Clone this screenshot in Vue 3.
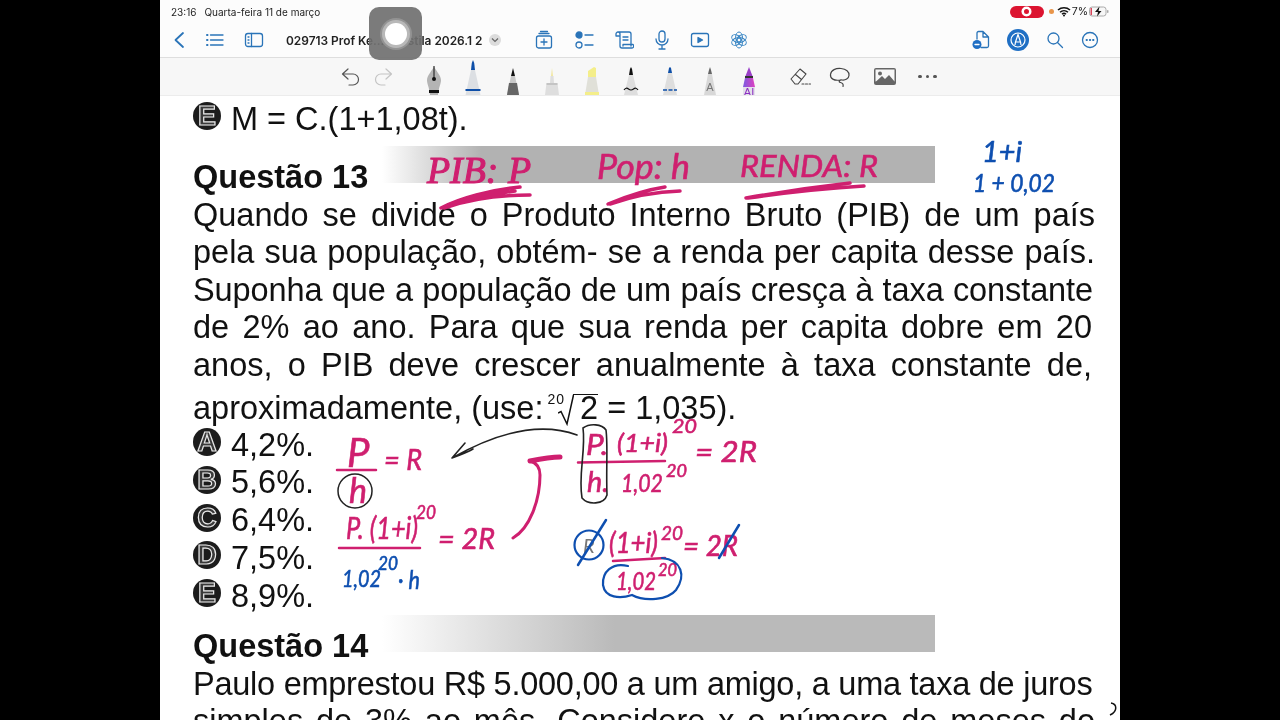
<script setup>
const firstLines = [
  { text: 'Quando se divide o Produto Interno Bruto (PIB) de um país', cls: '' },
  { text: 'pela sua população, obtém- se a renda per capita desse país.', cls: '' },
  { text: 'Suponha que a população de um país cresça à taxa constante', cls: 'end-2' },
  { text: 'de 2% ao ano. Para que sua renda per capita dobre em 20', cls: 'end-3' },
  { text: 'anos, o PIB deve crescer anualmente à taxa constante de,', cls: 'end-3' }
]

const options = [
  { letter: 'A', value: '4,2%.' },
  { letter: 'B', value: '5,6%.' },
  { letter: 'C', value: '6,4%.' },
  { letter: 'D', value: '7,5%.' },
  { letter: 'E', value: '8,9%.' }
]
</script>

<template>
  <div class="screen">
    <div class="ipad">
      <div class="status">
        <span class="time">23:16</span>
        <span class="date">Quarta-feira 11 de março</span>
        <span class="rec"><i></i></span>
        <span class="dot"></span>
        <svg width="14" height="11" viewBox="0 0 14 11">
          <path d="M1 4a9 9 0 0 1 12 0M3 6.200a6 6 0 0 1 8 0M5 8.200a3 3 0 0 1 4 0" fill="none" stroke="#111" stroke-width="1.500" />
          <circle cx="7" cy="9.500" r="1" fill="#111" />
        </svg>
        <span class="pct">7%</span>
        <svg width="20" height="11" viewBox="0 0 20 11">
          <rect x="0.500" y="1" width="16.500" height="9" rx="2.500" fill="#f7f7f7" stroke="#aaa" />
          <rect x="1.500" y="2" width="1.500" height="7" fill="#d8455a" />
          <rect x="18" y="4" width="1.500" height="3" rx="0.700" fill="#aaa" />
          <path d="M10.500 0.500 6 6h3l-1 4.500L12.500 5h-3z" fill="#111" />
        </svg>
      </div>

      <div class="nav">
        <svg class="ico back" width="14" height="20" viewBox="0 0 14 20"><path d="M11 3 3.500 10 11 17" /></svg>
        <svg class="ico list" width="20" height="20" viewBox="0 0 20 20">
          <path d="M5.500 5H18M5.500 10H18M5.500 15H18" />
          <path d="M2 5h.5M2 10h.5M2 15h.5" stroke-width="2" />
        </svg>
        <svg class="ico side" width="20" height="20" viewBox="0 0 20 20">
          <rect x="1.500" y="3.500" width="17" height="13" rx="2.500" />
          <path d="M7.500 3.500v13M4 7h1M4 10h1M4 13h1" />
        </svg>
        <span class="title">029713 Prof Ke...Apostila 2026.1 2</span>
        <span class="chev">
          <svg width="8" height="6" viewBox="0 0 8 6"><path d="M1 1.500 4 4.500 7 1.500" fill="none" stroke="#666" stroke-width="1.200" /></svg>
        </span>
        <div class="nav-mid">
          <svg class="ico" width="20" height="20" viewBox="0 0 20 20">
            <rect x="2.500" y="6" width="15" height="12" rx="2" />
            <path d="M5 3.500h10M6.500 1.500h7M10 9v6M7 12h6" />
          </svg>
          <svg class="ico" width="20" height="20" viewBox="0 0 20 20">
            <circle cx="5" cy="5" r="3" fill="#2a74b8" />
            <circle cx="5" cy="15" r="3" />
            <path d="M11 5h8M11 15h8" />
          </svg>
          <svg class="ico" width="20" height="20" viewBox="0 0 20 20">
            <path d="M4 2h11a2 2 0 0 1 2 2v12M4 2a2 2 0 0 0-2 2v2h3M4 2a2 2 0 0 1 2 2v12a2 2 0 0 0 2 2h10a2 2 0 0 0 1-3.500H9v1.500M9 7h5M9 10h5" />
          </svg>
          <svg class="ico" width="16" height="20" viewBox="0 0 16 20">
            <rect x="5" y="1" width="6" height="11" rx="3" />
            <path d="M2 9a6 6 0 0 0 12 0M8 15v4M5 19h6" />
          </svg>
          <svg class="ico" width="20" height="20" viewBox="0 0 20 20">
            <rect x="1.500" y="3.500" width="17" height="13" rx="2" />
            <path d="M8 7.500v5l4.500-2.500z" fill="#2a74b8" />
          </svg>
          <svg class="ico knot" width="18" height="18" viewBox="0 0 18 18">
            <ellipse cx="9" cy="6" rx="3.400" ry="5" />
            <ellipse cx="9" cy="6" rx="3.400" ry="5" transform="rotate(60 9 9)" />
            <ellipse cx="9" cy="6" rx="3.400" ry="5" transform="rotate(120 9 9)" />
            <ellipse cx="9" cy="6" rx="3.400" ry="5" transform="rotate(180 9 9)" />
            <ellipse cx="9" cy="6" rx="3.400" ry="5" transform="rotate(240 9 9)" />
            <ellipse cx="9" cy="6" rx="3.400" ry="5" transform="rotate(300 9 9)" />
          </svg>
        </div>
        <div class="nav-right">
          <svg class="ico" width="18" height="20" viewBox="0 0 18 20">
            <path d="M5 9V3a1.500 1.500 0 0 1 1.500-1.500H11L16.500 7v9a1.500 1.500 0 0 1-1.500 1.500H9M11 1.500V7h5.500" />
            <circle cx="5" cy="14.500" r="4.500" fill="#1f6fc4" stroke="none" />
            <path d="M3 14.500h4" stroke="#fff" />
          </svg>
          <span class="pen-on">
            <svg width="16" height="16" viewBox="0 0 16 16">
              <circle cx="8" cy="8" r="7" fill="none" stroke="#fff" stroke-width="1.200" />
              <path d="M8 2.500 5.500 10h5zM5.500 10l-.5 3M10.500 10l.5 3" fill="none" stroke="#fff" stroke-width="1.200" />
            </svg>
          </span>
          <svg class="ico" width="18" height="18" viewBox="0 0 18 18">
            <circle cx="7.500" cy="7.500" r="5.500" />
            <path d="M11.500 11.500 16.500 16.500" />
          </svg>
          <svg class="ico" width="18" height="18" viewBox="0 0 18 18">
            <circle cx="9" cy="9" r="7.500" />
            <path d="M5.500 9h.5M8.800 9h.5M12 9h.5" stroke-width="1.800" />
          </svg>
        </div>
      </div>

      <div class="tools">
        <svg class="stroke dark" width="22" height="22" viewBox="0 0 22 22"><path d="M8 3 2.500 8 8 13M3 8h10a5.500 5.500 0 0 1 0 11H9" /></svg>
        <svg class="stroke pale" width="22" height="22" viewBox="0 0 22 22"><path d="M14 3l5.500 5L14 13M19 8H9a5.500 5.500 0 0 0 0 11h4" /></svg>

        <div class="pens">
          <svg width="24" height="37" viewBox="0 0 24 37">
            <path d="M12 8 C13 12 19 17 19 22 C19 26 17 28 16 37 H8 C7 28 5 26 5 22 C5 17 11 12 12 8z" fill="#b4b4b4" />
            <path d="M12 8v12" stroke="#111" />
            <circle cx="12" cy="21" r="2" fill="#111" />
            <rect x="7" y="32" width="10" height="3" fill="#111" />
          </svg>
          <svg width="24" height="37" viewBox="0 0 24 37">
            <path d="M10 12 10.800 5 12 2 13.200 5 14 12z" fill="#0e4fa8" />
            <path d="M10 12h4L19.500 37h-15z" fill="#dcdfe3" />
            <rect x="4.500" y="31" width="15" height="2" fill="#0e4fa8" />
          </svg>
          <svg width="24" height="37" viewBox="0 0 24 37">
            <path d="M10 18 12 10 14 18z" fill="#111" />
            <path d="M10 18h4L18 37H6z" fill="#c8c8c8" />
            <path d="M8 25h8L18 37H6z" fill="#666" />
          </svg>
          <svg width="24" height="37" viewBox="0 0 24 37">
            <path d="M11 18 12 10 13 18z" fill="#f1e7a0" />
            <path d="M10.500 18h3l.5 7h3.500L19 37H5l1.500-12H10z" fill="#dedede" />
            <path d="M6.500 26h11" stroke="#aaa" />
          </svg>
          <svg width="24" height="37" viewBox="0 0 24 37">
            <path d="M8 19V13l6-4 2 1v9z" fill="#f4ee8a" />
            <path d="M8 19h8L19 37H5z" fill="#e0e0d8" />
            <rect x="5" y="34" width="14" height="3" fill="#f4ee8a" />
          </svg>
          <svg width="24" height="37" viewBox="0 0 24 37">
            <path d="M10 17 11 11 12 9 13 11 14 17z" fill="#111" />
            <path d="M10 17h4L19 37H5z" fill="#dedede" />
            <path d="M5 32q2-3 4.500-1t5 0 4.500 1" fill="none" stroke="#111" stroke-width="1.200" />
          </svg>
          <svg width="24" height="37" viewBox="0 0 24 37">
            <path d="M10 15 11 10 12 9 13 10 14 15z" fill="#0e4fa8" />
            <path d="M10 15h4L19 37H5z" fill="#dedede" />
            <path d="M5 32h14" stroke="#0e4fa8" stroke-width="1.600" stroke-dasharray="4 1.500" />
          </svg>
          <svg width="24" height="37" viewBox="0 0 24 37">
            <path d="M10 16 11 12 12 9 13 12 14 16z" fill="#666" />
            <path d="M10 16h4L18 37H6z" fill="#d8d8d8" />
            <text x="12" y="33" class="pen-text" fill="#777">A</text>
          </svg>
          <svg width="24" height="37" viewBox="0 0 24 37">
            <defs>
              <linearGradient id="aiPen" x1="0" y1="0" x2="1" y2="0">
                <stop offset="0" stop-color="#7b5be0" />
                <stop offset="1" stop-color="#e040c0" />
              </linearGradient>
            </defs>
            <path d="M8.500 18 12 9 15.500 18z" fill="#9a3fc8" />
            <rect x="8" y="18" width="8" height="2" fill="#333" />
            <path d="M8 20h8l2 9H6z" fill="url(#aiPen)" />
            <path d="M6 29h12v8H6z" fill="#e4e0ea" />
            <text x="12" y="38" class="pen-text" fill="#8a2fc0">AI</text>
          </svg>
        </div>

        <svg class="stroke eraser" width="22" height="22" viewBox="0 0 22 22">
          <path d="M2 13 11 3l6 5-8 10H6zM6.500 8.500l6 5M13 18h2M16.500 18H18.500M20 18h1.500" stroke-width="1.100" />
        </svg>
        <svg class="stroke lasso" width="22" height="22" viewBox="0 0 22 22">
          <path d="M11 14C5 15 1 12.500 1.500 8.500 2 4 7 2 12 2.500c5 .5 8.500 3 8 7-.3 3-3.500 5-7 4.500-2.500-.4-4 2-1.500 2.500 2.500.5 3 2 2.500 4" stroke-width="1.200" />
        </svg>
        <svg class="image" width="22" height="18" viewBox="0 0 22 18">
          <rect x="0" y="0" width="22" height="17" rx="2" fill="#666" />
          <rect x="1.500" y="1.500" width="19" height="12" fill="#f7f7f7" />
          <circle cx="6" cy="5.500" r="2" fill="#666" />
          <path d="M1.500 14 8 8l3 3 4-4 5.500 6.500V15h-19z" fill="#666" />
        </svg>
        <span class="more"><i></i><i></i><i></i></span>
      </div>

      <div class="page">
        <div class="line option first">
          <span class="badge">E</span>
          <span>M = C.(1+1,08t).</span>
        </div>

        <div class="heading">
          <strong>Questão 13</strong>
          <div class="band"></div>
        </div>
        <div class="line full" :class="row.cls" v-for="row in firstLines" :key="row.text">{{ row.text }}</div>
        <div class="line root-line">
          aproximadamente, (use:<sup class="index">20</sup><svg class="radical" width="16" height="32" viewBox="0 0 16 32"><path d="M0 19l3-1.500L9 30 15.500 1" fill="none" stroke="#111" stroke-width="1.500" /></svg><span class="radicand">2</span> = 1,035).
        </div>
        <div class="line option answer" v-for="item in options" :key="item.letter">
          <span class="badge">{{ item.letter }}</span>
          <span>{{ item.value }}</span>
        </div>

        <div class="heading">
          <strong>Questão 14</strong>
          <div class="band long"></div>
        </div>
        <div class="line tight">Paulo emprestou R$ 5.000,00 a um amigo, a uma taxa de juros</div>
        <div class="line full">simples de 3% ao mês. Considere x o número de meses do</div>
      </div>
    </div>

    <div class="record-box"><span></span></div>

    <!-- ink written over the page, sits on a free canvas -->
    <svg class="ink" width="1280" height="720" viewBox="0 0 1280 720">
      <g class="pink">
        <text class="serif" x="427" y="183" font-size="38" textLength="104" lengthAdjust="spacingAndGlyphs">PIB: P</text>
        <text x="597" y="179" font-size="34" textLength="93" lengthAdjust="spacingAndGlyphs">Pop: h</text>
        <text x="740" y="177" font-size="31" textLength="138" lengthAdjust="spacingAndGlyphs">RENDA: R</text>
        <text x="347" y="467" font-size="40">P</text>
        <text x="384" y="470" font-size="29" textLength="38" lengthAdjust="spacingAndGlyphs">= R</text>
        <text x="349" y="503" font-size="34">h</text>
        <text x="346" y="539" font-size="31" textLength="72" lengthAdjust="spacingAndGlyphs">P. (1+i)</text>
        <text x="416" y="519" font-size="19" textLength="20" lengthAdjust="spacingAndGlyphs">20</text>
        <text x="438" y="549" font-size="28" textLength="57" lengthAdjust="spacingAndGlyphs">= 2R</text>
        <text x="586" y="455" font-size="29" textLength="22" lengthAdjust="spacingAndGlyphs">P.</text>
        <text x="617" y="452" font-size="25" textLength="51" lengthAdjust="spacingAndGlyphs">(1+i)</text>
        <text x="672" y="433" font-size="20" textLength="25" lengthAdjust="spacingAndGlyphs">20</text>
        <text x="587" y="492" font-size="29" textLength="22" lengthAdjust="spacingAndGlyphs">h.</text>
        <text x="621" y="492" font-size="26" textLength="42" lengthAdjust="spacingAndGlyphs">1,02</text>
        <text x="666" y="477" font-size="18" textLength="21" lengthAdjust="spacingAndGlyphs">20</text>
        <text x="695" y="462" font-size="28" textLength="62" lengthAdjust="spacingAndGlyphs">= 2R</text>
        <text x="609" y="553" font-size="29" textLength="49" lengthAdjust="spacingAndGlyphs">(1+i)</text>
        <text x="661" y="540" font-size="20" textLength="22" lengthAdjust="spacingAndGlyphs">20</text>
        <text x="616" y="590" font-size="26" textLength="40" lengthAdjust="spacingAndGlyphs">1,02</text>
        <text x="658" y="576" font-size="18" textLength="19" lengthAdjust="spacingAndGlyphs">20</text>
        <text x="683" y="556" font-size="28" textLength="55" lengthAdjust="spacingAndGlyphs">= 2R</text>
      </g>
      <g class="blue">
        <text x="982" y="162" font-size="28" textLength="40" lengthAdjust="spacingAndGlyphs">1+i</text>
        <text x="973" y="192" font-size="25" textLength="82" lengthAdjust="spacingAndGlyphs">1 + 0,02</text>
        <text x="342" y="587" font-size="24" textLength="39" lengthAdjust="spacingAndGlyphs">1,02</text>
        <text x="378" y="570" font-size="19" textLength="20" lengthAdjust="spacingAndGlyphs">20</text>
        <text x="398" y="589" font-size="26" textLength="22" lengthAdjust="spacingAndGlyphs">· h</text>
      </g>
      <text x="583" y="553" font-size="20" class="old-r">R</text>

      <g fill="none" stroke="#cf1f6f" stroke-linecap="round">
        <path d="M441 208C460 198 490 190 520 187M444 208C470 199 495 195 530 195M455 202C475 196 495 194 515 191" stroke-width="3.500" />
        <path d="M608 204C625 197 645 190 665 187M610 204C630 197 650 192 680 191" stroke-width="3.500" />
        <path d="M746 198C780 192 815 187 850 183M748 198C790 192 830 188 864 186" stroke-width="3.500" />
        <path d="M337 470H376M339 548H420M578 462.500 665 461M613 561 665 558" stroke-width="2.500" />
        <path d="M513 538C530 528 540 500 540 475 540 468 537 463 530 461" stroke-width="3" />
        <path d="M530 461C545 458 552 457 560 457" stroke-width="5" />
      </g>
      <g fill="none" stroke="#222" stroke-linecap="round">
        <circle cx="355" cy="491" r="17" stroke-width="1.500" />
        <path d="M577 435C550 425 510 425 452 458L465 443M452 458C460 455 468 452 473 449" stroke-width="1.600" />
        <path d="M583 428C590 423 602 424 606 430 608 445 606 470 607 495 604 505 588 505 582 498 578 475 586 450 583 428Z" stroke-width="1.600" />
      </g>
      <g fill="none" stroke="#0e4fb0" stroke-linecap="round">
        <circle cx="589" cy="545" r="14.500" stroke-width="2.200" />
        <path d="M578 565 606 520M719 558 739 525" stroke-width="2.500" />
        <path d="M628 566C612 562 602 572 603 585 605 598 620 599 632 595 645 602 668 600 676 590 686 576 682 560 662 558" stroke-width="2.200" />
      </g>
      <path d="M1111 703C1117 704 1118 711 1110 715" fill="none" stroke="#111" stroke-width="1.500" />
    </svg>
  </div>
</template>

<style>
html, body {
  background: #000;
}
</style>

<style scoped>
.screen {
  position: relative;
  width: 1280px;
  height: 720px;
  overflow: hidden;
  background: #000;
  font-family: "Liberation Sans", Arial, sans-serif;
  filter: blur(0.3px);
}
.ipad {
  width: 960px;
  height: 720px;
  margin: 0 auto;
  overflow: hidden;
  background: #fff;
  display: flex;
  flex-direction: column;
}

.status {
  height: 23px;
  flex: none;
  display: flex;
  align-items: center;
  padding: 0 11px;
  background: #fcfcfc;
  font-family: Inter, sans-serif;
  font-size: 10px;
  color: #222;
}
.date {
  margin-left: 8px;
  flex: 1;
}
.rec {
  width: 34px;
  height: 12px;
  border-radius: 6px;
  background: #dc1430;
  display: flex;
  align-items: center;
  justify-content: center;
}
.rec i {
  width: 5px;
  height: 5px;
  border-radius: 50%;
  background: #dc1430;
  border: 2px solid #fff;
  box-shadow: 0 0 0 0.5px #fff;
}
.dot {
  width: 5px;
  height: 5px;
  border-radius: 50%;
  background: #e8954a;
  margin: 0 3px 0 5px;
}
.pct {
  font-size: 10.5px;
  margin: 0 1px 0 1px;
}

.nav {
  height: 34px;
  flex: none;
  display: flex;
  align-items: center;
  background: #fcfcfc;
  border-bottom: 1px solid #dedede;
  padding-left: 12px;
}
.ico {
  flex: none;
  fill: none;
  stroke: #2a74b8;
  stroke-width: 1.300;
  stroke-linecap: round;
  stroke-linejoin: round;
}
.back {
  stroke-width: 1.800;
}
.knot {
  stroke-width: 1;
  stroke: #3a86c4;
}
.list {
  margin-left: 19px;
}
.side {
  margin-left: 19px;
}
.title {
  margin-left: 22px;
  font-family: Inter, sans-serif;
  font-size: 11.900px;
  font-weight: 600;
  color: #222;
  white-space: nowrap;
}
.chev {
  margin-left: 6px;
  width: 12px;
  height: 12px;
  border-radius: 50%;
  background: #dcdcdc;
  display: flex;
  align-items: center;
  justify-content: center;
}
.nav-mid {
  margin-left: 33px;
  display: flex;
  align-items: center;
  gap: 20px;
}
.nav-right {
  margin-left: auto;
  margin-right: 21px;
  display: flex;
  align-items: center;
  gap: 17px;
}
.pen-on {
  width: 22px;
  height: 22px;
  border-radius: 50%;
  background: #1f6fc4;
  display: flex;
  align-items: center;
  justify-content: center;
}

.tools {
  height: 37px;
  flex: none;
  display: flex;
  align-items: center;
  padding-left: 180px;
  background: #f7f7f7;
  border-bottom: 1px solid #ececec;
  overflow: hidden;
}
.stroke {
  flex: none;
  fill: none;
  stroke-width: 1.200;
  stroke-linecap: round;
  stroke-linejoin: round;
}
.dark {
  stroke: #555;
}
.pale {
  stroke: #c4c4c4;
  margin-left: 10px;
}
.pens {
  display: flex;
  align-self: flex-end;
  gap: 15.400px;
  margin-left: 28px;
}
.pens svg {
  display: block;
}
.pen-text {
  font-family: "Liberation Sans", Arial, sans-serif;
  font-size: 11px;
  text-anchor: middle;
}
.eraser {
  stroke: #444;
  margin-left: 28px;
}
.lasso {
  stroke: #444;
  margin-left: 18px;
}
.image {
  margin-left: 23px;
}
.more {
  margin-left: 22px;
  display: flex;
  gap: 4px;
}
.more i {
  width: 3.500px;
  height: 3.500px;
  border-radius: 50%;
  background: #555;
}

.page {
  flex: 1;
  padding: 5px 25px 0 33px;
  font-size: 32.500px;
  color: #111;
}
.line {
  height: 37.600px;
  line-height: 37.600px;
  white-space: nowrap;
}
.full {
  white-space: normal;
  text-align: justify;
  text-align-last: justify;
}
.end-2 {
  padding-right: 2px;
  letter-spacing: -0.100px;
}
.end-3 {
  padding-right: 3px;
}
.tight {
  letter-spacing: -0.250px;
}
.option {
  display: flex;
  align-items: center;
  gap: 10px;
}
.answer {
  height: 37.800px;
  line-height: 37.800px;
}
.first {
  margin-bottom: 8px;
}
.badge {
  width: 28px;
  height: 28px;
  flex: none;
  margin-bottom: 7px;
  border-radius: 50%;
  background: #1c1c1c;
  color: #3a3a3a;
  font-size: 27px;
  line-height: 28px;
  font-weight: 700;
  text-align: center;
  letter-spacing: 0;
  -webkit-text-stroke: 1.200px #e8e8e8;
}
.heading {
  height: 50px;
  display: flex;
  align-items: flex-end;
}
.heading strong {
  line-height: 37.600px;
  white-space: nowrap;
}
.band {
  width: 553px;
  height: 37px;
  margin: 0 0 14px 14px;
  background: linear-gradient(90deg, #fff 0, #b2b2b2 18%);
}
.band.long {
  background: linear-gradient(90deg, #fff 0, #bababa 42%);
}
.root-line {
  height: 42px;
  line-height: 46px;
}
.index {
  font-size: 14px;
  line-height: 0;
  vertical-align: 15px;
  margin-left: 4px;
  letter-spacing: 1px;
}
.radical {
  margin-left: -7px;
  vertical-align: -7px;
}
.radicand {
  display: inline-block;
  line-height: 27px;
  border-top: 1.500px solid #111;
  padding: 0 0 0 7px;
  margin-left: -1px;
}

.record-box {
  position: absolute;
  left: 369px;
  top: 7px;
  width: 53px;
  height: 53px;
  border-radius: 10px;
  background: rgba(112, 112, 112, 0.92);
  display: flex;
  align-items: center;
  justify-content: center;
}
.record-box span {
  width: 22px;
  height: 22px;
  border-radius: 50%;
  background: #fff;
  box-shadow: 0 0 0 3px #b8b8b8, 0 0 0 5px #939393;
}

.ink {
  position: absolute;
  left: 0;
  top: 0;
  pointer-events: none;
}
.ink text {
  font-family: Lato, sans-serif;
  font-style: italic;
  font-weight: 400;
  stroke-width: 0.600px;
}
.ink .serif {
  font-family: "Liberation Serif", serif;
  stroke-width: 1.100px;
}
.pink {
  fill: #cf1f6f;
  stroke: #cf1f6f;
}
.blue {
  fill: #0e4fb0;
  stroke: #0e4fb0;
}
.ink .old-r {
  fill: #777;
}
</style>
